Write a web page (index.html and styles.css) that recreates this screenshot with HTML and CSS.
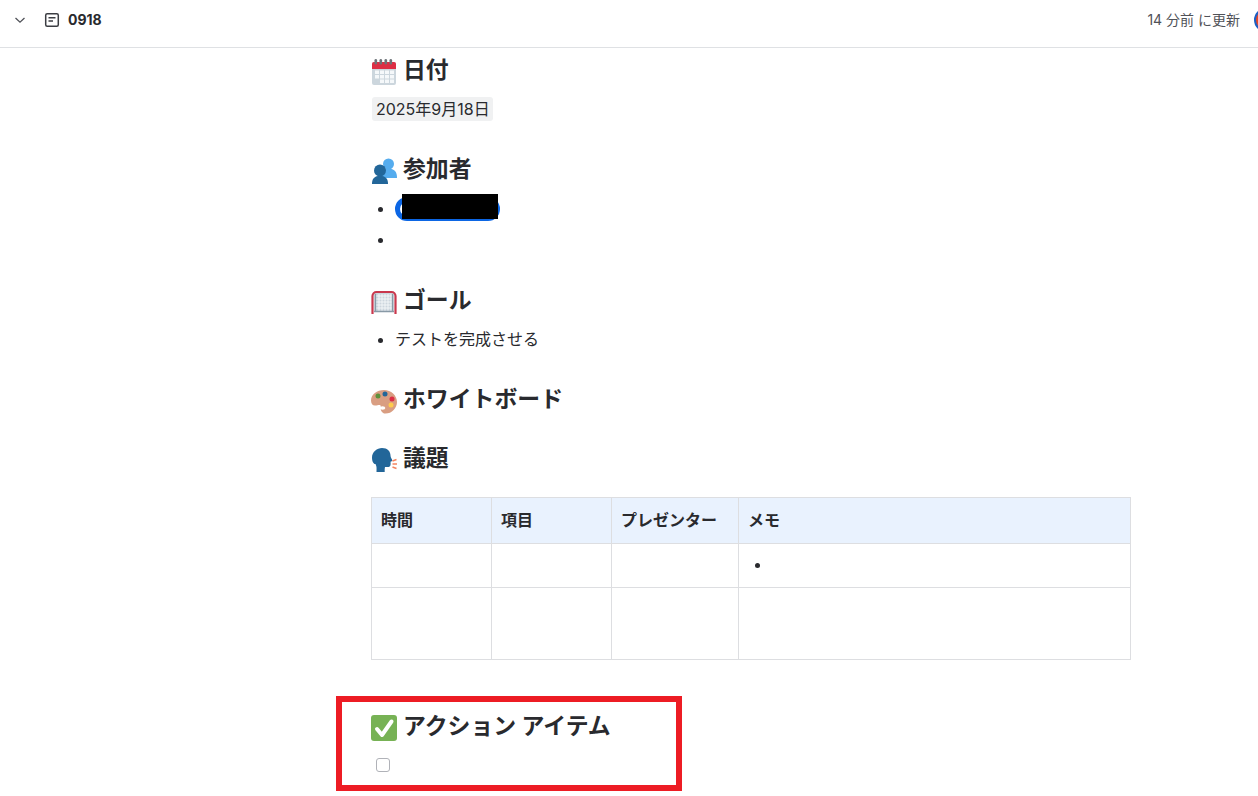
FILE: index.html
```html
<!DOCTYPE html>
<html lang="ja">
<head>
<meta charset="utf-8">
<title>0918</title>
<link rel="stylesheet" href="styles.css">
</head>
<body>
<header class="topbar">
  <div class="topbar-left">
    <svg class="chevron" width="12" height="12" viewBox="0 0 12 12"><path d="M1.5 4 L6 8.2 L10.5 4" fill="none" stroke="#505258" stroke-width="1.3"/></svg>
    <svg class="page-icon" width="16" height="16" viewBox="0 0 16 16"><rect x="1.700" y="1.700" width="12.600" height="12.600" rx="1.500" fill="none" stroke="#3b3d42" stroke-width="1.500"/><path d="M4.500 5.800h7M4.500 9h4.500" stroke="#3b3d42" stroke-width="1.500" fill="none"/></svg>
    <span class="page-title">0918</span>
  </div>
  <div class="topbar-right">
    <span class="updated">14 分前 に更新</span>
    <svg class="avatar" width="24" height="24" viewBox="0 0 24 24"><circle cx="12" cy="12" r="11" fill="#e2482a" stroke="#1d5fc4" stroke-width="2"/></svg>
  </div>
</header>
<main class="doc">
  <h2 class="heading h-date">
    <svg class="emoji" viewBox="0 0 26 26"><path d="M1 5a2 2 0 0 1 2-2h20a2 2 0 0 1 2 2v19a2 2 0 0 1-2 2H3a2 2 0 0 1-2-2z" fill="#ccd6dd"/><path d="M1 5a2 2 0 0 1 2-2h20a2 2 0 0 1 2 2v5H1z" fill="#dd2e44"/><g fill="#f5f8fa"><rect x="4" y="11.500" width="4" height="3.500"/><rect x="9" y="11.500" width="4" height="3.500"/><rect x="14" y="11.500" width="4" height="3.500"/><rect x="19" y="11.500" width="4" height="3.500"/><rect x="4" y="16" width="4" height="3.500"/><rect x="9" y="16" width="4" height="3.500"/><rect x="14" y="16" width="4" height="3.500"/><rect x="19" y="16" width="4" height="3.500"/><rect x="9" y="20.500" width="4" height="3.500"/><rect x="14" y="20.500" width="4" height="3.500"/><rect x="19" y="20.500" width="4" height="3.500"/></g><g fill="#6d7378"><rect x="3.500" y="0" width="2.600" height="5.500" rx="1.300"/><rect x="8.500" y="0" width="2.600" height="5.500" rx="1.300"/><rect x="13.500" y="0" width="2.600" height="5.500" rx="1.300"/><rect x="18.500" y="0" width="2.600" height="5.500" rx="1.300"/></g></svg>
    <span>日付</span>
  </h2>
  <p class="date-row"><span class="date-lozenge">2025年9月18日</span></p>

  <h2 class="heading h-people">
    <svg class="emoji" viewBox="0 0 26 26"><circle cx="17.500" cy="6" r="5.500" fill="#55acee"/><path d="M10 20V12c2-.8 4.500-1.200 7.500-1.200s5 .6 6.500 2.200 2 4 2 7z" fill="#55acee"/><circle cx="9" cy="12.500" r="6" fill="#226699"/><path d="M1 26c0-1 0-3 1-5 1-1.500 3-3 5-3h4c2 0 4 1.500 5 3 1 2 1 4 1 5z" fill="#226699"/></svg>
    <span>参加者</span>
  </h2>
  <ul class="list list-people">
    <li><span class="mention"><span class="mention-redaction"></span></span></li>
    <li class="empty-item"></li>
  </ul>

  <h2 class="heading h-goal">
    <svg class="emoji" viewBox="0 0 26 26"><rect x="3" y="4" width="20" height="19" fill="#ccd6dd"/><path d="M5 7h16M5 10h16M5 13h16M5 16h16M5 19h16M8 5v17M11 5v17M14 5v17M17 5v17M20 5v17" fill="none" stroke="#f5f8fa" stroke-width=".9"/><path d="M4.500 5v18M21.500 5v18M3 22.500h20" fill="none" stroke="#8899a6" stroke-width="1.300"/><path d="M1.500 25V7a4 4 0 0 1 4-4h15a4 4 0 0 1 4 4v18" fill="none" stroke="#c9384d" stroke-width="2.200"/></svg>
    <span>ゴール</span>
  </h2>
  <ul class="list list-goal"><li>テストを完成させる</li></ul>

  <h2 class="heading h-board">
    <svg class="emoji" viewBox="0 0 26 26"><path d="M13 2C6 2 0 6.500 0 12.500c0 3 1.500 5 4 5 3 0 4.500-1 5.500 0S8 23.500 13 25.500c7 1 13-5 13-11.500S20 2 13 2z" fill="#d99e82"/><ellipse cx="11.500" cy="20" rx="2.800" ry="1.700" fill="#fff"/><circle cx="7" cy="8" r="2.500" fill="#5c913b"/><circle cx="14" cy="6" r="2.500" fill="#226699"/><circle cx="21" cy="11" r="2.500" fill="#dd2e44"/><circle cx="20" cy="17" r="2.500" fill="#ffcc4d"/></svg>
    <span>ホワイトボード</span>
  </h2>

  <h2 class="heading h-topic">
    <svg class="emoji" viewBox="0 0 26 26"><path d="M11 1c5.500 0 8.500 3.500 8.500 7.500 0 2 1.500 3.500 1.800 5 .1.800-1 1-1.800 1.200.3 1.800.2 3.800-.8 4.800-1 .8-3 .6-4.700.4-.4 1.500-.3 3-.3 5.100H5.500c0-3 .5-5.500-1-8C3 17.500 1 15 1 10.500 1 5 6 1 11 1z" fill="#226699"/><path d="M21.500 14l4-1.500M21.500 17h4.500M21.500 20l4 1.500" fill="none" stroke="#f4845f" stroke-width="1.500"/></svg>
    <span>議題</span>
  </h2>

  <table class="agenda">
    <colgroup><col class="col-a"><col class="col-b"><col class="col-c"><col class="col-d"></colgroup>
    <thead>
      <tr><th>時間</th><th>項目</th><th>プレゼンター</th><th>メモ</th></tr>
    </thead>
    <tbody>
      <tr class="row-one"><td></td><td></td><td></td><td><ul class="cell-list"><li></li></ul></td></tr>
      <tr class="row-two"><td></td><td></td><td></td><td></td></tr>
    </tbody>
  </table>

  <h2 class="heading h-action">
    <svg class="emoji" viewBox="0 0 26 26"><rect x="0" y="0" width="26" height="26" rx="3" fill="#77b255"/><path d="M6 14l5 6L20.500 6.500" fill="none" stroke="#fff" stroke-width="4" stroke-linecap="round" stroke-linejoin="round"/></svg>
    <span>アクション アイテム</span>
  </h2>
  <div class="task"><span class="checkbox"></span></div>
</main>
<div class="annotation"></div>
</body>
</html>
```
FILE: styles.css
```css
* { box-sizing: border-box; }
html, body { margin: 0; height: 100%; }
body {
  width: 1258px;
  height: 796px;
  overflow: hidden;
  position: relative;
  background: #fff;
  color: #292a2e;
  font-family: Inter, "Noto Sans CJK JP", sans-serif;
  font-size: 16px;
}
.topbar {
  height: 48px;
  border-bottom: 1px solid #dfe1e4;
  display: flex;
  align-items: center;
  justify-content: space-between;
  padding: 0 0 7px 14px;
  overflow: hidden;
}
.topbar-left { display: flex; align-items: center; }
.chevron { margin-right: 18px; }
.page-icon { margin-right: 8px; }
.page-title { font-size: 14px; font-weight: 700; color: #292a2e; padding-bottom: 1px; }
.topbar-right { display: flex; align-items: center; gap: 14px; margin-right: -20px; }
.updated { font-size: 14px; color: #505258; padding-bottom: 2px; }
.avatar { flex: none; }
.doc { width: 760px; margin-left: 371px; }
.heading {
  display: flex;
  align-items: center;
  margin: 0;
  font-size: 22.860px;
  line-height: 30px;
  font-weight: 700;
  color: #292a2e;
}
.emoji { width: 26px; height: 26px; margin: 4px 6px 0 0; flex: none; }
.h-date { margin-top: 7px; }
.date-row { display: flex; height: 24px; margin: 12px 0 0 1px; }
.date-lozenge {
  background: #f0f1f2;
  border-radius: 3px;
  padding: 1px 3.500px 0 4px;
  font-size: 16px;
  line-height: 23px;
}
.h-people { margin-top: 33px; }
.list { margin: 0; padding-left: 24px; font-size: 16px; }
.list li { line-height: 22px; height: 24px; }
.list-people { margin-top: 13px; }
.list-people li { margin-bottom: 7px; }
.mention {
  display: block;
  width: 105px;
  height: 24px;
  border-radius: 12px;
  border: 5px solid #0c66e4;
  position: relative;
}
.mention-redaction {
  position: absolute;
  left: 2px;
  top: -8px;
  width: 96px;
  height: 25px;
  background: #000;
}
.h-goal { margin-top: 33px; }
.list-goal { margin-top: 13px; }
.h-board { margin-top: 32px; }
.h-topic { margin-top: 29px; }
.agenda {
  margin-top: 24px;
  width: 759px;
  border-collapse: collapse;
  table-layout: fixed;
}
.col-a, .col-b { width: 120px; }
.col-c { width: 127px; }
.col-d { width: 392px; }
.agenda th, .agenda td { border: 1px solid #dddee1; padding: 0 9px; }
.agenda th {
  height: 46px;
  background: #e9f2fe;
  font-size: 16px;
  font-weight: 700;
  text-align: left;
  padding-bottom: 4px;
}
.row-one td { height: 44px; }
.row-two td { height: 72px; }
.cell-list { margin: 0 0 4px; padding-left: 24px; font-size: 16px; line-height: 20px; }
.h-action { margin-top: 51px; }
.task { margin-top: 17px; padding-left: 5px; }
.checkbox {
  display: block;
  width: 14px;
  height: 14px;
  border: 1.500px solid #b0b2b8;
  border-radius: 3px;
  background: #fff;
}
.annotation {
  position: absolute;
  left: 336px;
  top: 696px;
  width: 346px;
  height: 95px;
  border: 6px solid #ed1c24;
}
```
